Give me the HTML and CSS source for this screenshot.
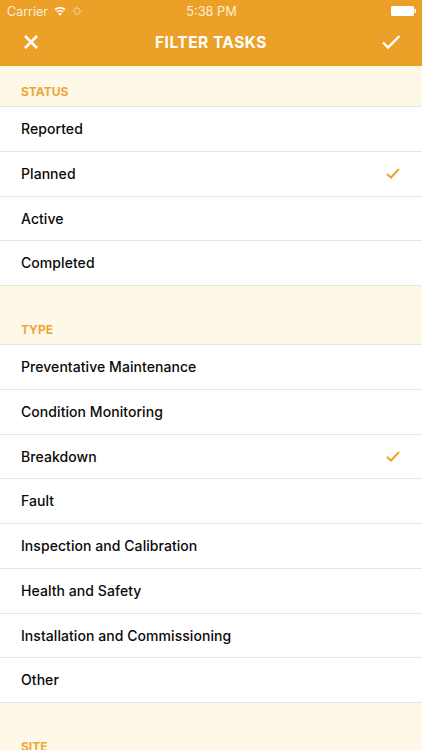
FILE: index.html
```html
<!DOCTYPE html>
<html lang="en">
<head>
<meta charset="utf-8">
<title>Filter Tasks</title>
<link rel="stylesheet" href="styles.css">
</head>
<body>
<div class="screen">
  <header class="top">
    <div class="status">
      <div class="status-left">
        <span>Carrier</span>
        <svg class="wifi" width="12" height="9" viewBox="0 0 14 10"><path d="M7 10 4.800 7.300a3.400 3.400 0 0 1 4.400 0zM3.800 6.200 2.600 4.700a6.800 6.800 0 0 1 8.800 0l-1.200 1.500a4.900 4.900 0 0 0-6.400 0zM1.700 3.600.4 2.100a10.200 10.200 0 0 1 13.200 0l-1.300 1.500a8.300 8.300 0 0 0-10.600 0z" fill="#fff"/></svg>
        <svg class="spin" width="10" height="10" viewBox="0 0 11 11"><path d="M5.500.5v3M5.500 7.500v3M.5 5.500h3M7.500 5.500h3M2 2l2 2M7 7l2 2M2 9l2-2M7 4l2-2" stroke="#fff" stroke-opacity=".7" stroke-width="1" fill="none"/></svg>
      </div>
      <div class="status-time">5:38 PM</div>
      <div class="status-right">
        <svg width="25" height="10" viewBox="0 0 25 10"><rect x="0" y="0" width="23" height="10" rx="1.500" fill="#fff"/><rect x="23.500" y="3" width="1.500" height="4" fill="#fff"/></svg>
      </div>
    </div>
    <div class="nav">
      <svg class="nav-close" width="16" height="16" viewBox="0 0 16 16"><path d="M2 2l12 12M14 2 2 14" stroke="#fff" stroke-width="2.600" fill="none"/></svg>
      <h1>FILTER TASKS</h1>
      <svg class="nav-check" width="20" height="16" viewBox="0 0 20 16"><path d="M2 8.500l5 5L18.500 2" stroke="#fff" stroke-width="2.400" fill="none"/></svg>
    </div>
  </header>

  <section>
    <h2 class="head first">STATUS</h2>
    <ul class="list">
      <li>Reported</li>
      <li>Planned<svg class="tick" width="14" height="11" viewBox="0 0 14 11"><path d="M1 6l4 3.500L13 1" stroke="#eea328" stroke-width="2" fill="none"/></svg></li>
      <li>Active</li>
      <li>Completed</li>
    </ul>
  </section>

  <section>
    <h2 class="head">TYPE</h2>
    <ul class="list">
      <li>Preventative Maintenance</li>
      <li>Condition Monitoring</li>
      <li>Breakdown<svg class="tick" width="14" height="11" viewBox="0 0 14 11"><path d="M1 6l4 3.500L13 1" stroke="#eea328" stroke-width="2" fill="none"/></svg></li>
      <li>Fault</li>
      <li>Inspection and Calibration</li>
      <li>Health and Safety</li>
      <li>Installation and Commissioning</li>
      <li>Other</li>
    </ul>
  </section>

  <section>
    <h2 class="head">SITE</h2>
  </section>
</div>
</body>
</html>
```
FILE: styles.css
```css
html, body {
  margin: 0;
  padding: 0;
}
body {
  width: 422px;
  height: 750px;
  overflow: hidden;
  background: #fef8e9;
  font-family: Inter, "Open Sans", "Liberation Sans", sans-serif;
}
.screen {
  display: flex;
  flex-direction: column;
}
.top {
  background: #eca027;
  height: 66px;
  color: #fff;
  flex: none;
}
.status {
  height: 22px;
  display: grid;
  grid-template-columns: 1fr auto 1fr;
  align-items: center;
  padding: 0 6px 0 7px;
  font-size: 12.500px;
  color: #fbeed6;
}
.status-left {
  display: flex;
  align-items: center;
  gap: 6px;
}
.status-right {
  display: flex;
  justify-content: flex-end;
}
.status-right svg { display: block; }
.status-time { font-size: 12.800px; }
.nav {
  height: 44px;
  display: flex;
  align-items: center;
  justify-content: space-between;
  padding: 0 21px 4px 23px;
  box-sizing: border-box;
}
.nav h1 {
  margin: 0 0 0 2px;
  font-size: 15.500px;
  font-weight: 700;
  letter-spacing: .5px;
}
.head {
  margin: 0;
  height: 58px;
  box-sizing: border-box;
  padding: 36px 0 0 21px;
  font-size: 12px;
  line-height: 16px;
  font-weight: 700;
  color: #eba836;
}
.head.first {
  height: 40px;
  padding-top: 18px;
}
.list {
  margin: 0;
  padding: 0;
  list-style: none;
  background: #fff;
  border-top: 1px solid #e9e6e0;
}
.list li {
  height: 43.250px;
  border-bottom: 1px solid #e9e6e0;
  display: flex;
  align-items: center;
  justify-content: space-between;
  padding: 0 21px .5px;
  box-sizing: content-box;
  font-size: 14px;
  letter-spacing: .06px;
  font-weight: 500;
  color: #0a0a0a;
}
.tick { margin-right: 1px; }
```
